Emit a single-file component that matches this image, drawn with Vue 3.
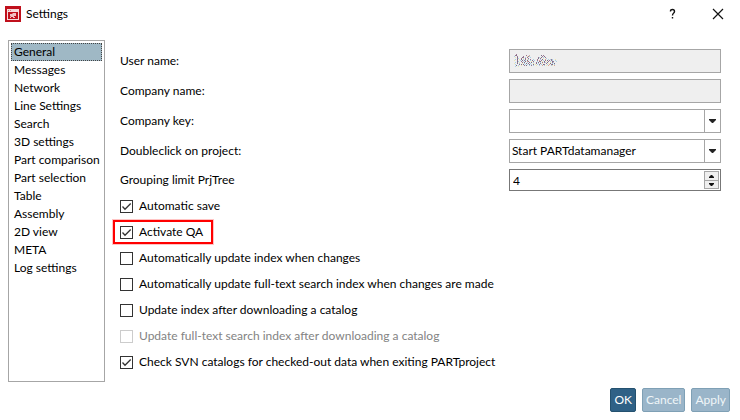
<script setup>
import { ref, reactive } from 'vue'

const sections = [
  'General', 'Messages', 'Network', 'Line Settings', 'Search', '3D settings',
  'Part comparison', 'Part selection', 'Table', 'Assembly', '2D view', 'META', 'Log settings',
]
const current = ref('General')

const companyKey = ref('')
const doubleclick = ref('Start PARTdatamanager')
const groupingLimit = ref(4)

const checks = reactive([
  { id: 'autosave', label: 'Automatic save', on: true },
  { id: 'qa', label: 'Activate QA', on: true, marked: true },
  { id: 'index', label: 'Automatically update index when changes', on: false },
  { id: 'fulltext', label: 'Automatically update full-text search index when changes are made', on: false },
  { id: 'index-dl', label: 'Update index after downloading a catalog', on: false },
  { id: 'fulltext-dl', label: 'Update full-text search index after downloading a catalog', on: false, disabled: true },
  { id: 'svn', label: 'Check SVN catalogs for checked-out data when exiting PARTproject', on: true },
])

// Scrambled user name, one character per pixel
const palette = { p: '#9a7590', d: '#7c7088', b: '#a9cfe4', y: '#eee6b4', o: '#dca692', g: '#b5b3bd' }
const noise = [
  '..p.........................................',
  '.pd.........p..o...........d.p..............',
  'b..p.....p...ypb............p.d.............',
  '.y.d....dp.b.p..b.......pb.d.b.p............',
  '...pb..p.y.p..p.........d.p..y..b...........',
  '.b.d.y.d.b.p.yb.p..b...p..b.d..o..b.bpb..y..',
  'y..p..b.d.pb.d..b.d.b..p.o.p.b.p.d.p.pb..b..',
  '...db..p.b.d.op..y.p...b.pd.y.d.y.p.b.dp..b.',
  '.b.p.y..p.d..b.d.d.b..p.d.b.p.pb.d..y.pb....',
  'y..d.b..y.b.d.p.b..y..d.b.p.y...p.y.d.b.d...',
  '.b...p.d.d.b.b.d.b.d.y.b.p.b.dp..b.o.pd.b...',
  '..d.b..y..p.d..b.p.b..y..b..o.b.y.o..by.o...',
  '.b..y.......................................',
]
const dots = noise.flatMap((row, y) =>
  [...row].map((c, x) => ({ x, y, fill: palette[c] })).filter((d) => d.fill),
)
</script>

<template>
  <div class="dialog">
    <header class="titlebar">
      <svg class="logo" width="16" height="16" viewBox="0 0 16 16" aria-hidden="true">
        <rect width="16" height="16" fill="#c0101c" />
        <path d="M2 3h12v11H2z" fill="#f6dcdd" />
        <path d="M3 4h1v1H3zM5 4h1v1H5z" fill="#d8777c" />
        <path d="M3 6h10v7H3z" fill="#c0101c" />
        <path d="M5 8h2l1-1h3v3H9v1h1v1H8v-1H6v1H5v-1l1-1H5z" fill="#f0bfc2" />
      </svg>
      <h1>Settings</h1>
      <button class="caption" type="button" aria-label="Help">
        <svg width="12" height="12" viewBox="0 0 12 12" aria-hidden="true">
          <path d="M3.500 3.500V3Q3.500 1.500 5.500 1.500T7.500 3.500Q7.500 4.500 6.500 5.200T5.500 7.500M5.500 9v1.500" fill="none" stroke="#111" stroke-width="1.400" />
        </svg>
      </button>
      <button class="caption" type="button" aria-label="Close">
        <svg width="12" height="12" viewBox="0 0 12 12" aria-hidden="true">
          <path d="M1 1l10 10M11 1L1 11" stroke="#111" stroke-width="1.200" />
        </svg>
      </button>
    </header>

    <main class="body">
      <nav class="sections" aria-label="Sections">
        <button
          v-for="s in sections" :key="s" type="button"
          :class="{ active: s === current }" @click="current = s"
        >{{ s }}</button>
      </nav>

      <form class="panel" @submit.prevent>
        <div class="row">
          <label for="user">User name:</label>
          <div class="field">
            <input id="user" type="text" disabled />
            <svg class="scramble" width="44" height="13" viewBox="0 0 44 13" shape-rendering="crispEdges" aria-hidden="true">
              <rect v-for="d in dots" :key="d.x + '-' + d.y" :x="d.x" :y="d.y" width="1" height="1" :fill="d.fill" />
            </svg>
          </div>
        </div>
        <div class="row">
          <label for="company">Company name:</label>
          <div class="field"><input id="company" type="text" disabled /></div>
        </div>
        <div class="row">
          <label for="key">Company key:</label>
          <div class="field">
            <select id="key" v-model="companyKey"><option value=""></option></select>
            <span class="drop"><svg width="7" height="4" viewBox="0 0 7 4" aria-hidden="true"><path d="M0 0h7v1L4 4H3L0 1z" fill="#222" /></svg></span>
          </div>
        </div>
        <div class="row">
          <label for="dbl">Doubleclick on project:</label>
          <div class="field">
            <select id="dbl" v-model="doubleclick"><option>Start PARTdatamanager</option></select>
            <span class="drop"><svg width="7" height="4" viewBox="0 0 7 4" aria-hidden="true"><path d="M0 0h7v1L4 4H3L0 1z" fill="#222" /></svg></span>
          </div>
        </div>
        <div class="row spin">
          <label for="limit">Grouping limit PrjTree</label>
          <div class="field">
            <input id="limit" v-model.number="groupingLimit" type="number" />
            <span class="steps">
              <button type="button" aria-label="Increase" @click="groupingLimit++">
                <svg width="5" height="3" viewBox="0 0 5 3" aria-hidden="true"><path d="M0 3V2L2 0h1l2 2v1z" fill="#111" /></svg>
              </button>
              <button type="button" aria-label="Decrease" @click="groupingLimit--">
                <svg width="5" height="3" viewBox="0 0 5 3" aria-hidden="true"><path d="M0 0v1l2 2h1l2-2V0z" fill="#111" /></svg>
              </button>
            </span>
          </div>
        </div>

        <div class="checks">
          <label v-for="c in checks" :key="c.id" class="check" :class="{ marked: c.marked, off: c.disabled }">
            <span class="tick">
              <input v-model="c.on" type="checkbox" :disabled="c.disabled" />
              <svg v-if="c.on" width="13" height="13" viewBox="0 0 13 13" aria-hidden="true">
                <path d="M2.500 6.500l2.500 2.700L10.700 3.500" fill="none" stroke="#333" stroke-width="1.300" />
              </svg>
            </span>
            <span>{{ c.label }}</span>
          </label>
        </div>
      </form>
    </main>

    <footer class="actions">
      <button class="primary" type="button">OK</button>
      <button type="button">Cancel</button>
      <button type="button">Apply</button>
    </footer>
  </div>
</template>

<style>
body {
  margin: 0;
  background: #fff;
}
</style>

<style scoped>
.dialog {
  display: flex;
  flex-direction: column;
  box-sizing: border-box;
  min-height: 100vh;
  padding-bottom: 8px;
  font: 12px/18px Lato, "Open Sans", sans-serif;
  color: #000;
  background: #fff;
}
.dialog *,
.dialog *::before {
  box-sizing: border-box;
}
button,
input,
select {
  font: inherit;
  color: inherit;
  margin: 0;
}
.titlebar {
  display: flex;
  align-items: center;
  height: 28px;
  padding: 0 5px;
}
h1 {
  flex: 1;
  margin: 0 0 0 5px;
  font: inherit;
}
.caption {
  display: grid;
  place-items: center;
  width: 34px;
  height: 28px;
  margin-left: 11px;
  padding: 0;
  border: 0;
  background: none;
}
.body {
  display: flex;
  flex: 1;
  padding: 12px 19px 6px 8px;
}
.sections {
  display: flex;
  flex-direction: column;
  flex: none;
  width: 97px;
  padding: 2px;
  border: 1px solid #a6a6a6;
}
.sections button {
  height: 18px;
  padding: 0 2px;
  border: 1px solid transparent;
  background: none;
  line-height: 16px;
  text-align: left;
  white-space: nowrap;
}
.sections button.active {
  border: 1px dotted #444;
  background: #9fb8c5;
}
.panel {
  display: flex;
  flex-direction: column;
  flex: 1;
  gap: 6px;
  min-width: 0;
  padding: 9px 0 0 15px;
}
.row {
  display: grid;
  grid-template-columns: 11fr 6fr;
  align-items: center;
  height: 24px;
}
.row.spin {
  height: 22px;
}
.field {
  display: grid;
  grid-template-columns: minmax(0, 1fr) 17px;
  position: relative;
  height: 100%;
}
.field > input,
.field > select {
  grid-area: 1 / 1 / 2 / 3;
  appearance: none;
  width: 100%;
  height: 100%;
  padding: 0 20px 0 2px;
  border: 1px solid #a6a6a6;
  border-radius: 0;
  background: #fff;
  outline: 0;
}
.field > input:disabled {
  background: #efefef;
}
.field > input[type="number"] {
  appearance: textfield;
  padding-left: 3px;
  border-color: #777;
}
.scramble {
  position: absolute;
  left: 5px;
  top: 5px;
}
.drop {
  grid-area: 1 / 2;
  display: grid;
  place-items: center;
  border: 1px solid #a6a6a6;
  pointer-events: none;
}
.steps {
  grid-area: 1 / 2;
  display: grid;
  grid-template-rows: 1fr 1fr;
  margin: 2px 2px 2px 0;
  border: 1px solid #a6a6a6;
}
.steps button {
  display: grid;
  place-items: center;
  min-height: 0;
  padding: 0;
  border: 0;
  background: #efefef;
}
.steps button + button {
  border-top: 1px solid #a6a6a6;
}
.checks {
  display: flex;
  flex-direction: column;
  align-items: flex-start;
  margin-top: -4px;
}
.check {
  display: flex;
  align-items: center;
  gap: 6px;
  position: relative;
  height: 26px;
}
.check.off {
  color: #838383;
}
.tick {
  display: grid;
}
.tick > * {
  grid-area: 1 / 1;
  pointer-events: none;
}
.tick input {
  appearance: none;
  width: 13px;
  height: 13px;
  border: 1px solid #333;
  background: #fff;
}
.tick input:disabled {
  border-color: #ccc;
}
.marked::before {
  content: "";
  position: absolute;
  inset: 1px -10px 1px -7px;
  border: 2px solid #f00;
  box-shadow: 0 0 0 1px #ffc4c4;
}
.actions {
  display: flex;
  justify-content: flex-end;
  gap: 6px;
  padding: 0 10px;
}
.actions button {
  height: 24px;
  padding: 0 3px;
  border: 1px solid #7fa0b5;
  border-radius: 2px;
  background: #9ab5c9;
  color: #f0f5f8;
}
.actions button.primary {
  border-color: #24516f;
  background: #2f6186;
  color: #fff;
}
</style>
